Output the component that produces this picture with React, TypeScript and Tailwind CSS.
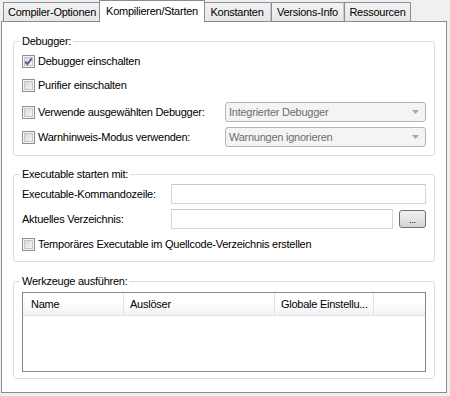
import React from 'react'

const FONT = { fontFamily: '"Liberation Sans", Arial, sans-serif' }

function Check({ checked }: { checked?: boolean }) {
  return (
    <span className="relative flex h-[13px] w-[13px] shrink-0 items-center justify-center border border-[#8e8f8f] bg-[#f4f4f4]">
      <span className="h-[9px] w-[9px] border border-[#c6c6c6] bg-linear-to-br from-[#d8d8d8] to-[#f6f6f6]" />
      {checked && (
        <svg className="absolute left-0 top-0" width="11" height="11" viewBox="0 0 11 11">
          <path d="M2.2 5.6 L4.4 8 L8.8 2.4" fill="none" stroke="#4b5f8e" strokeWidth="1.9" />
        </svg>
      )}
    </span>
  )
}

function CheckRow({ label, checked }: { label: string; checked?: boolean }) {
  return (
    <label className="flex h-[20px] items-center gap-[3px]">
      <Check checked={checked} />
      <span>{label}</span>
    </label>
  )
}

function Combo({ value }: { value: string }) {
  return (
    <div className="flex h-[20px] w-[201px] items-center justify-between rounded-[3px] border border-[#b3b6b9] bg-[#f4f4f4] pl-[3px] pr-[6px] text-[#6d6d6d]">
      <span>{value}</span>
      <svg width="7" height="4" viewBox="0 0 7 4">
        <path d="M0 0 H7 L3.5 4 Z" fill="#a7a7a7" />
      </svg>
    </div>
  )
}

function Group({ title, children, className }: { title: string; children: React.ReactNode; className?: string }) {
  return (
    <fieldset className={`mx-[11px] rounded-[3px] border border-[#d5dfe5] px-[8px] ${className ?? ''}`}>
      <legend className="ml-[-2px] px-[2px] leading-[13px]">{title}</legend>
      {children}
    </fieldset>
  )
}

const tabs = ['Compiler-Optionen', 'Kompilieren/Starten', 'Konstanten', 'Versions-Info', 'Ressourcen']
const tabWidths = ['w-[98px]', 'w-[106px]', 'w-[68px]', 'w-[73px]', 'w-[67px]']

export default function App() {
  return (
    <div className="h-[396px] w-[450px] overflow-hidden bg-[#f0f0f0] text-[11px] tracking-[-0.25px] text-black" style={FONT}>
      <div className="flex h-[21px] items-end pl-[3px]">
        {tabs.map((t, i) =>
          i === 1 ? (
            <div
              key={t}
              className={`relative z-10 -mx-[2px] -mb-[1px] flex h-[22px] items-center justify-center border border-b-0 border-[#898c95] bg-white pb-[1px] ${tabWidths[i]}`}
            >
              {t}
            </div>
          ) : (
            <div
              key={t}
              className={`flex h-[19px] items-center justify-center border border-b-0 border-[#898c95] bg-linear-to-b from-[#f3f3f3] to-[#e6e6e6] pt-[1px] ${i === 4 ? '' : 'border-r-[#c8c8c8]'} ${tabWidths[i]}`}
            >
              {t}
            </div>
          )
        )}
      </div>

      <div className="ml-[1px] h-[372px] w-[446px] border border-[#898c95] bg-white pt-[13px]">
        <Group title="Debugger:" className="pb-[8px]">
          <div className="mt-[3px] flex flex-col">
            <CheckRow label="Debugger einschalten" checked />
            <div className="mt-[4px]">
              <CheckRow label="Purifier einschalten" />
            </div>
            <div className="mt-[7px] flex items-center justify-between">
              <CheckRow label="Verwende ausgewählten Debugger:" />
              <Combo value="Integrierter Debugger" />
            </div>
            <div className="mt-[5px] flex items-center justify-between">
              <CheckRow label="Warnhinweis-Modus verwenden:" />
              <Combo value="Warnungen ignorieren" />
            </div>
          </div>
        </Group>

        <Group title="Executable starten mit:" className="mt-[12px] pb-[7px]">
          <div className="mt-[3px] flex items-center">
            <span className="w-[149px]">Executable-Kommandozeile:</span>
            <div className="h-[20px] flex-1 border border-[#d4d7dc] border-t-[#c5c9cf] bg-white" />
          </div>
          <div className="mt-[5px] flex items-center">
            <span className="w-[149px]">Aktuelles Verzeichnis:</span>
            <div className="h-[20px] flex-1 border border-[#d4d7dc] border-t-[#c5c9cf] bg-white" />
            <button className="ml-[6px] flex h-[18px] w-[27px] items-end justify-center rounded-[3px] border border-[#707070] bg-linear-to-b from-[#f2f2f2] to-[#d4d4d4] pb-[2px] text-[9px] leading-[9px]">
              ...
            </button>
          </div>
          <div className="mt-[5px]">
            <CheckRow label="Temporäres Executable im Quellcode-Verzeichnis erstellen" />
          </div>
        </Group>

        <Group title="Werkzeuge ausführen:" className="mt-[13px] pb-[6px]">
          <div className="mt-[4px] h-[80px] border border-[#828790] bg-white">
            <div className="flex h-[23px] border-b border-[#e2e3e6] bg-linear-to-b from-white from-40% to-[#f1f2f4]">
              <div className="flex w-[101px] items-center border-r border-[#e0e2e5] pl-[8px]">Name</div>
              <div className="flex w-[151px] items-center border-r border-[#e0e2e5] pl-[6px]">Auslöser</div>
              <div className="flex w-[99px] items-center border-r border-[#e0e2e5] pl-[6px]">Globale Einstellu...</div>
            </div>
          </div>
        </Group>
      </div>
    </div>
  )
}
